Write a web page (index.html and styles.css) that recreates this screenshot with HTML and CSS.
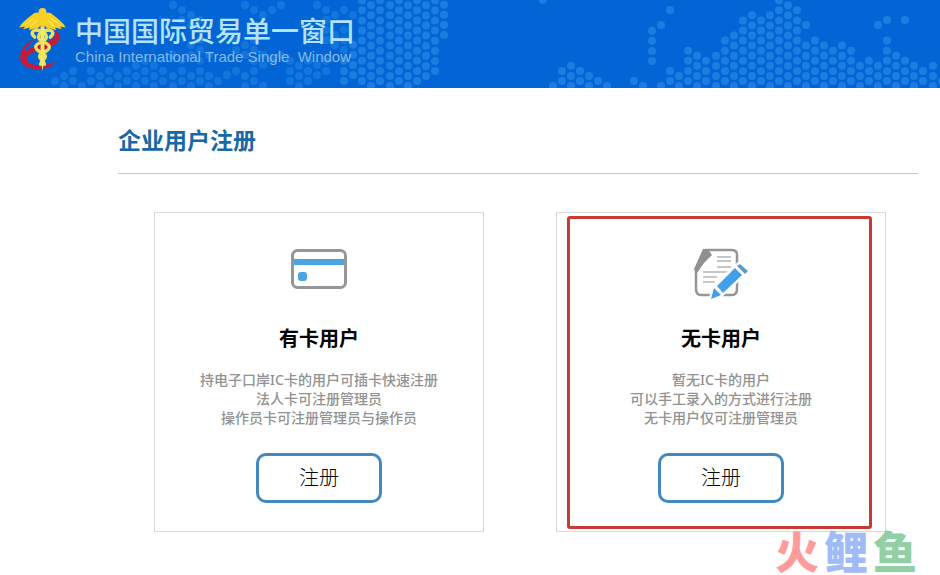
FILE: index.html
```html
<!DOCTYPE html>
<html lang="zh-CN">
<head>
<meta charset="utf-8">
<title>中国国际贸易单一窗口</title>
<meta name="viewport" content="width=device-width, initial-scale=1">
<link rel="stylesheet" href="styles.css">
</head>
<body>
<header class="banner">
  <svg class="banner-map" viewBox="0 0 940 88" preserveAspectRatio="xMinYMin slice" aria-hidden="true">
    <path class="map-faint" d="M55 81v-1M64 86V75M73 81V70M82 86v-1M91 81V70M100 86V75M109 81V70M118 86V75M127 81V70M136 86V65M145 81V60M154 86V65M163 81V70M173 86V75M182 81V70M191 86V75M200 81V60M209 86V75M218 81v-1M227 75v-1M236 71v-1M245 86V75M254 81V60M263 86v-1M290 81V60M299 86V65M308 81V60M317 75V55M326 71V60
    M173 5v-1M182 20V0M191 25V5M200 20V10M191 55V35M182 60V50M200 50V30M173 55v-1M209 55V45
    M245 5v-1M254 10V0M263 15V5M272 10V0M281 5v-1M236 50V30M245 55V35M254 50V30M263 65V45M272 60V50M281 55V45M317 5v-1M326 20V0M335 15V5M344 10V0M317 35V25M326 40V20M335 45V25M344 50V20M353 15V5"/>
    <path d="M344 81V60M353 75V35M362 81V-1M371 86V4M380 81V-1M390 86V4M399 81V-1M408 86V4M417 81V-1M426 76V4M435 71V-1M444 35V4"/>
    <path d="M543 0v-1M553 86v-1M562 81V70M571 86V65M580 81V70M589 86V75M598 81v-1M607 86v-1M634 81v-1M643 86v-1
    M652 61V30M661 25V15M661 86v-1M670 10v-1M670 81V70M679 86V75M688 81V50M697 86V55M706 81V60M716 86V55M725 81V40M734 86V35M743 81V20M752 86V15M761 81V20M770 86V15M779 81V-1M788 86V4M797 81V10M806 25V15M806 86V45M815 81V40M824 86V45M833 81V50M842 86V45M851 81V50M860 86V65M869 81V60M878 25V15M878 86V65M887 20v-1M887 81V40M896 86V55M905 20v-1M905 81V60M914 86V65M923 81V70M933 86V65M942 81v-1"/>
  </svg>
  <a class="brand" href="#">
    <svg class="emblem" viewBox="0 0 50 66" aria-hidden="true">
      <path d="M37 23c9 3 8 10-1 16-10 6-21 5-26 10-4 6 2 10 13 10 7 0 13-2 16-5-3 6-9 9-18 9C6 63-1 56 3 45c3-7 8-10 15-13-7 5-11 9-11 14 4-6 12-7 20-10 9-3 14-8 10-13Z" fill="#c81935"/>
      <g fill="none" stroke="#ecdf61" stroke-width="3.500" stroke-linecap="round">
        <path d="M17 30c-5-4-2-8 3-7 5 0 9 3 9 7 0 6-11 5-11 10 0 6 10 5 10 10 0 3-5 4-5 8"/>
        <path d="M33 30c5-4 2-8-3-7-5 0-9 3-9 7 0 6 11 5 11 10 0 6-10 5-10 10 0 3 5 4 5 8"/>
      </g>
      <path d="M23 9h4v44l-2 12-2-12Z" fill="#f5e95f"/>
      <circle cx="25" cy="4" r="4" fill="#f9cf22"/>
      <path d="M25 8c3-5 8-4 12 0 5 4 9 7 12 12l-6-1 2 3-7-2 1 3-6-2-1 2-5-5-2 3-2-3-5 5-1-2-6 2 1-3-7 2 2-3-6 1c3-5 7-8 12-12 4-4 9-5 12 0Z" fill="#f9cf22"/>
      <path d="m7 17 9-6M13 19l7-7M43 17l-9-6M37 19l-7-7" stroke="#fff176" fill="none"/>
    </svg>
    <span class="brand-text">
      <span class="brand-name">中国国际贸易单一窗口</span>
      <span class="brand-sub" lang="en">China International Trade Single&nbsp; Window</span>
    </span>
  </a>
</header>
<main class="content">
  <h1 class="page-title">企业用户注册</h1>
  <div class="cards">
    <section class="card">
      <svg class="card-icon" viewBox="0 0 60 56" aria-hidden="true">
        <rect x="3.500" y="4.500" width="53" height="37" rx="5" fill="#fff" stroke="#969696" stroke-width="3"/>
        <path d="M5 13h50v6H5Z" fill="#4ba3df"/>
        <rect x="9" y="26" width="9" height="9" rx="3" fill="#4ba3df"/>
      </svg>
      <h2 class="card-title">有卡用户</h2>
      <p class="card-text">持电子口岸IC卡的用户可插卡快速注册<br>法人卡可注册管理员<br>操作员卡可注册管理员与操作员</p>
      <button class="register" type="button">注册</button>
    </section>
    <section class="card card-selected">
      <svg class="card-icon" viewBox="0 0 60 56" aria-hidden="true">
        <path d="M15 4h26q5 0 5 5v34q0 6-5 6H10q-5 0-5-6V23Z" fill="#fff" stroke="#969696" stroke-width="2.500"/>
        <path d="M12 3h5l4 6-8 8-7 10-3-4Z" fill="#909090"/>
        <path d="M26 11h14M26 15h14M26 21h14M12 26h26M12 31h14M12 36h12" stroke="#b4b4b4" stroke-width="1.500"/>
        <path d="m17 55 5-17 25-22 12 9-28 26Z" fill="#fff"/>
        <path d="m26 40 18-18 7 7-19 18ZM23 42l7 7-10 4Z" fill="#42a0e8"/>
        <path d="m46 20 3-2 8 7-3 3Z" fill="#5a9cc9"/>
      </svg>
      <h2 class="card-title">无卡用户</h2>
      <p class="card-text">暂无IC卡的用户<br>可以手工录入的方式进行注册<br>无卡用户仅可注册管理员</p>
      <button class="register" type="button">注册</button>
    </section>
  </div>
</main>
<div class="watermark"><span class="mark-red">火</span><span class="mark-blue">鲤</span><span class="mark-green">鱼</span></div>
</body>
</html>
```
FILE: styles.css
```css
* {
  box-sizing: border-box;
}

body {
  margin: 0;
  position: relative;
  min-height: 100vh;
  background: #fff;
  color: #000;
  font-family: "Noto Sans", "Noto Sans CJK SC", sans-serif;
}

.banner {
  position: relative;
  height: 88px;
  overflow: hidden;
  background: #0265d6;
}

.banner-map {
  position: absolute;
  inset: 0;
  width: 100%;
  height: 100%;
  fill: none;
  stroke: #1c7de0;
  stroke-width: 8;
  stroke-linecap: round;
  stroke-dasharray: 0 10.1;
}

.map-faint {
  opacity: 0.7;
}

.brand {
  position: relative;
  display: inline-flex;
  gap: 8px;
  padding: 8px 18px;
  text-decoration: none;
}

.emblem {
  width: 49px;
  height: 64px;
}

.brand-text {
  display: flex;
  flex-direction: column;
  padding-top: 4px;
}

.brand-name {
  color: #b4e2ff;
  font-family: "Noto Sans CJK SC", sans-serif;
  font-size: 28px;
  font-weight: 500;
  line-height: 36px;
}

.brand-sub {
  color: #86b9ea;
  font-family: "Liberation Sans", sans-serif;
  font-size: 15px;
  line-height: 18px;
}

.content {
  margin: 36px 22px 0 118px;
}

.page-title {
  margin: 0;
  padding-bottom: 17px;
  border-bottom: 1px solid #c4c4c4;
  color: #1768a5;
  font-size: 23px;
  line-height: 32px;
}

.cards {
  display: grid;
  grid-template-columns: 1fr 1fr;
  gap: 72px;
  padding: 38px 32px 0 36px;
}

.card {
  position: relative;
  display: flex;
  flex-direction: column;
  align-items: center;
  padding: 33px 8px 28px;
  border: 1px solid #d9d9d9;
}

.card-selected::after {
  content: "";
  position: absolute;
  inset: 3px 13px 2px 10px;
  border: 3px solid #c93a35;
  border-radius: 3px;
  pointer-events: none;
}

.card-icon {
  width: 60px;
  height: 56px;
}

.card-title {
  margin: 22px 0 16px;
  font-size: 20px;
  line-height: 30px;
}

.card-text {
  margin: 0 0 26px;
  color: #929292;
  font-size: 14px;
  font-weight: 500;
  line-height: 19px;
  text-align: center;
}

.register {
  width: 126px;
  height: 50px;
  padding: 0 0 3px;
  border: 3px solid #4389bf;
  border-radius: 10px;
  background: #fff;
  color: #000;
  font-family: inherit;
  font-size: 20px;
  font-weight: 300;
}

.watermark {
  position: absolute;
  right: 23px;
  bottom: 0;
  display: flex;
  gap: 5px;
  font-family: "Noto Sans CJK SC", sans-serif;
  font-size: 44px;
  font-weight: 900;
  line-height: 50px;
}

.mark-red {
  color: #ff9b9b;
}

.mark-blue {
  color: #a0bcf8;
}

.mark-green {
  color: #93cfa5;
}
```
